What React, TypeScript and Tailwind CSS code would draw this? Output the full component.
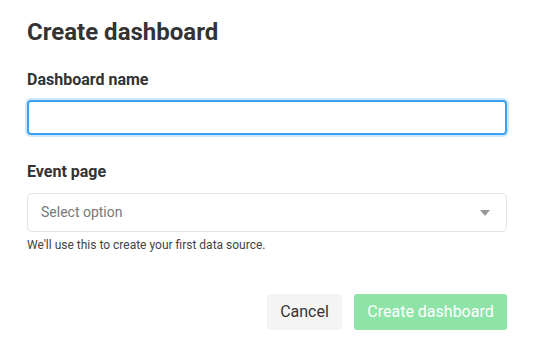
export default function App (): JSX.Element {
  return (
    <section className="w-[546px] h-[357px] bg-white font-['Roboto',sans-serif] text-[#333] pl-[27px] pr-[39px] pt-[16px]">
      <h1 className="text-[24px] font-bold leading-[32px]">Create dashboard</h1>

      <div className="mt-[22px]">
        <label htmlFor="name" className="block text-[16px] font-bold leading-[20px]">Dashboard name</label>
        <input
          id="name"
          type="text"
          className="mt-[10px] w-full h-[35px] rounded-[4px] border-2 border-[#3aa0f2] ring-2 ring-[#cfe7fb] outline-none px-3 text-[14px]"
        />
      </div>

      <div className="mt-[27px]">
        <label className="block text-[16px] font-bold leading-[20px]">Event page</label>
        <div className="mt-[11px] w-full h-[39px] rounded-[5px] border border-[#e3e3e3] flex items-center justify-between pl-[13px] pr-[16px]">
          <span className="text-[14px] text-[#777]">Select option</span>
          <svg width="10" height="6" viewBox="0 0 10 6"><path d="M0 0h10L5 6z" fill="#999" /></svg>
        </div>
        <p className="mt-[5px] text-[12px] text-[#444] leading-[16px]">We'll use this to create your first data source.</p>
      </div>

      <div className="mt-[41px] flex justify-end gap-[12px]">
        <button className="h-[36px] w-[75px] rounded-[3px] bg-[#f4f4f4] text-[16px] text-[#333]">Cancel</button>
        <button className="h-[36px] w-[153px] rounded-[3px] bg-[#8ee3a7] text-[16px] text-white">Create dashboard</button>
      </div>
    </section>
  )
}
